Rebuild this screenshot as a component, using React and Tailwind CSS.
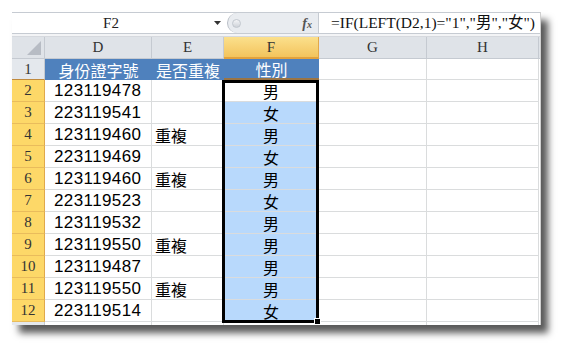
import React from "react";

const serif = { fontFamily: '"Liberation Serif", "DejaVu Serif", serif' };
const cjk = { fontFamily: '"Noto Sans CJK TC", "Noto Sans", sans-serif' };
const sans = { fontFamily: '"Liberation Sans", Arial, sans-serif' };

const rows = [
  ["123119478", "", "男"],
  ["223119541", "", "女"],
  ["123119460", "重複", "男"],
  ["223119469", "", "女"],
  ["123119460", "重複", "男"],
  ["223119523", "", "女"],
  ["123119532", "", "男"],
  ["123119550", "重複", "男"],
  ["123119487", "", "男"],
  ["123119550", "重複", "男"],
  ["223119514", "", "女"],
];

function ColHead({ w, label, active }) {
  return (
    <div
      className={
        "h-full flex items-center justify-center border-r text-[15px] text-[#333] " +
        w +
        (active
          ? " bg-gradient-to-b from-[#fbe08c] to-[#f3c45c] border-[#e2a84a] border-b-2 border-b-[#e3a23c]"
          : " bg-[#dfe3e8] border-[#c5cad1] border-b border-b-[#c5cad1]")
      }
      style={serif}
    >
      {label}
    </div>
  );
}

export default function App() {
  return (
    <div className="w-[561px] h-[347px] bg-white overflow-hidden pt-[12px] pl-[12px]">
      <div className="relative w-[529px] h-[313px] bg-white flex flex-col shadow-[7px_8px_7px_rgba(0,0,0,0.65)] overflow-hidden border-r border-[#d0d0d0]">
        {/* formula bar */}
        <div className="h-[22px] flex border-t border-b border-[#c6cbd2] bg-white">
          <div className="w-[215px] h-full flex items-center relative">
            <div className="w-[196px] text-center text-[15px] text-[#222] pl-[2px]" style={serif}>F2</div>
            <div className="w-[19px] flex items-center justify-center">
              <svg width="7" height="4" viewBox="0 0 7 4"><path d="M0 0h7L3.5 4z" fill="#333" /></svg>
            </div>
          </div>
          <div className="w-[91px] h-full bg-[#e9ecf0] flex items-center rounded-l-[11px] border-l border-[#b8bec6]">
            <div className="ml-[4px] w-[9px] h-[9px] rounded-full bg-gradient-to-b from-[#f4f5f7] to-[#cfd3d9] border border-[#c2c7ce]"></div>
            <div className="flex-1"></div>
            <span className="mr-[6px] italic text-[14px] font-bold text-[#555]" style={serif}>f<span className="text-[10px]">x</span></span>
          </div>
          <div className="flex-1 h-full flex items-center justify-start pl-[12px] text-[15.5px] text-[#111] border-l border-[#c6cbd2] whitespace-nowrap overflow-hidden" style={{ fontFamily: '"Liberation Serif", "Noto Sans CJK TC", serif' }}>
            =IF(LEFT(D2,1)="1","男","女")
          </div>
        </div>
        <div className="h-[3px] bg-[#f3f4f6] border-b border-[#d6d9de]"></div>

        {/* column header row */}
        <div className="h-[22px] flex shrink-0">
          <div className="w-[33px] h-full bg-[#dfe3e8] border-r border-b border-[#c5cad1] flex items-end justify-end p-[3px]">
            <svg width="14" height="14" viewBox="0 0 14 14"><path d="M14 0V14H0z" fill="#b7bcc4" /></svg>
          </div>
          <ColHead w="w-[107px]" label="D" />
          <ColHead w="w-[72px]" label="E" />
          <ColHead w="w-[95px]" label="F" active />
          <ColHead w="w-[108px]" label="G" />
          <ColHead w="w-[112px]" label="H" />
          <div className="flex-1 h-full bg-[#dfe3e8] border-b border-[#c5cad1]"></div>
        </div>

        {/* row 1 */}
        <div className="h-[21px] flex shrink-0">
          <div className="w-[33px] h-full bg-[#e4e8ed] border-r border-b border-[#c5cad1] border-b-[#c08a3e] flex items-center justify-center text-[15px] text-[#333]" style={serif}>1</div>
          <div className="w-[179px] h-full flex bg-[#4f81bd] text-white text-[16px]" style={cjk}>
            <div className="w-[107px] flex items-center justify-center leading-none">身份證字號</div>
            <div className="w-[72px] flex items-center justify-center leading-none">是否重複</div>
          </div>
          <div className="w-[95px] h-full bg-[#4f81bd] text-white text-[16px] flex items-center justify-center leading-none border-b-2 border-[#9a7444]" style={cjk}>性別</div>
          <div className="w-[108px] h-full border-r border-b border-[#dadcdd]"></div>
          <div className="w-[112px] h-full border-r border-b border-[#dadcdd]"></div>
          <div className="flex-1"></div>
        </div>

        {rows.map((r, i) => (
          <div key={i} className="h-[22px] flex shrink-0">
            <div className="w-[33px] h-full bg-[#fdd868] border-r border-b border-r-[#e0a94c] border-b-[#e9bc5c] flex items-center justify-center text-[15px] text-[#333] leading-none" style={serif}>
              {i + 2}
            </div>
            <div className="w-[107px] h-full border-r border-b border-[#dadcdd] flex items-center pl-[9px] text-[17px] tracking-[0.4px] text-black leading-none" style={sans}>
              {r[0]}
            </div>
            <div className="w-[72px] h-full border-r border-b border-[#dadcdd] flex items-center pl-[3px] text-[16px] text-black leading-none" style={cjk}>
              {r[1]}
            </div>
            <div
              className={
                "w-[95px] h-full border-r border-b border-[#dadcdd] flex items-center justify-center text-[16px] text-black leading-none " +
                (i === 0 ? "bg-white" : "bg-[#b8d9fc]")
              }
              style={cjk}
            >
              {r[2]}
            </div>
            <div className="w-[108px] h-full border-r border-b border-[#dadcdd]"></div>
            <div className="w-[112px] h-full border-r border-b border-[#dadcdd]"></div>
            <div className="flex-1"></div>
          </div>
        ))}
        <div className="flex-1 flex">
          <div className="w-[33px] h-full bg-[#e4e8ed] border-r border-[#c5cad1]"></div>
          <div className="w-[107px] h-full border-r border-[#dadcdd]"></div>
          <div className="w-[72px] h-full border-r border-[#dadcdd]"></div>
          <div className="w-[95px] h-full border-r border-[#dadcdd]"></div>
          <div className="w-[108px] h-full border-r border-[#dadcdd]"></div>
          <div className="w-[112px] h-full border-r border-[#dadcdd]"></div>
        </div>

        {/* selection overlay */}
        <div className="absolute left-[210px] top-[68px] w-[97px] h-[243px] border-[3px] border-black pointer-events-none">
          <div className="absolute -right-[5px] -bottom-[5px] w-[7px] h-[7px] bg-black border border-white"></div>
        </div>
      </div>
    </div>
  );
}
